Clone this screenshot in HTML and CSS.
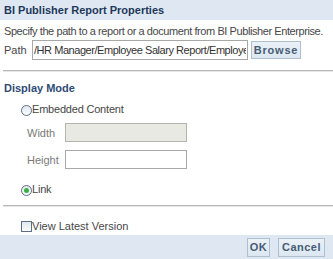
FILE: index.html
```html
<!DOCTYPE html>
<html lang="en">
  <head>
    <meta charset="UTF-8" />
    <title>BI Publisher Report Properties</title>
    <link rel="stylesheet" href="styles.css">
  </head>
  <body>
    <div class="dialog">
      <div class="title">BI Publisher Report Properties</div>
      <div class="intro">Specify the path to a report or a document from BI Publisher Enterprise.</div>
      <div class="path-row">
        <span class="label">Path</span>
        <input class="field path" type="text" value="/HR Manager/Employee Salary Report/Employee Salary Report.xdo">
        <button class="btn browse">Browse</button>
      </div>
      <hr class="sep">
      <div class="section">Display Mode</div>
      <label class="radio-row">
        <span class="radio"></span>Embedded Content
      </label>
      <div class="dim-row">
        <span class="dim-label">Width</span>
        <span class="field dim disabled"></span>
      </div>
      <div class="dim-row">
        <span class="dim-label">Height</span>
        <span class="field dim"></span>
      </div>
      <label class="radio-row link">
        <span class="radio on"></span>Link
      </label>
      <hr class="sep lower">
      <label class="check-row">
        <span class="check"></span>View Latest Version
      </label>
      <div class="footer">
        <button class="btn ok">OK</button>
        <button class="btn cancel">Cancel</button>
      </div>
    </div>
  </body>
</html>
```

FILE: styles.css
```css
body {
  margin: 0;
  background: #ffffff;
  font-family: "Liberation Sans", Arial, sans-serif;
  font-size: 11px;
  color: #3c3c3c;
}

.dialog {
  width: 333px;
  height: 259px;
  display: flex;
  flex-direction: column;
  overflow: hidden;
}

.title {
  background: #dfe8f2;
  height: 20px;
  line-height: 21px;
  padding-left: 4px;
  font-weight: bold;
  color: #22385a;
}

.intro {
  margin-top: 4px;
  padding-left: 4px;
  line-height: 14px;
  color: #474747;
  white-space: nowrap;
  letter-spacing: -0.42px;
}

.path-row {
  display: flex;
  align-items: center;
  height: 20px;
  margin-top: 2px;
  padding-left: 4px;
}

.label {
  width: 28px;
  color: #474747;
}

.field {
  box-sizing: border-box;
  border: 1px solid #a8a8a8;
  background: #fff;
  font-family: inherit;
  font-size: 11px;
  color: #333;
}

.path {
  width: 216px;
  height: 20px;
  padding: 0 1px;
  margin: 0;
  outline: none;
  letter-spacing: -0.45px;
}

.btn {
  box-sizing: border-box;
  height: 19px;
  padding: 0;
  margin: 0;
  border: 1px solid #aebfcf;
  background: linear-gradient(#eaf1f7, #dce7f1);
  font-family: "Liberation Sans", Arial, sans-serif;
  font-size: 11px;
  font-weight: bold;
  letter-spacing: 0.5px;
  color: #465c74;
}

.browse {
  margin-left: 3px;
  width: 50px;
  height: 18px;
  letter-spacing: 0.8px;
}

.sep {
  border: none;
  border-top: 1px solid #b9b9b9;
  border-bottom: 1px solid #e6e6e6;
  margin: 10px 0 0 3px;
  height: 0;
}

.section {
  margin-top: 9px;
  padding-left: 4px;
  font-weight: bold;
  color: #2f4b76;
  line-height: 14px;
}

.radio-row {
  display: flex;
  align-items: center;
  margin-top: 7px;
  padding-left: 21px;
  line-height: 14px;
  letter-spacing: -0.2px;
  color: #474747;
}

.radio {
  box-sizing: border-box;
  width: 11px;
  height: 11px;
  margin-top: 3px;
  border: 1px solid #5a6e88;
  border-radius: 50%;
  background: linear-gradient(#e4e9ef, #fbfcfd);
  display: flex;
  align-items: center;
  justify-content: center;
}

.radio.on::after {
  content: "";
  width: 5px;
  height: 5px;
  border-radius: 50%;
  background: #3bb043;
}

.dim-row {
  display: flex;
  align-items: center;
  margin-top: 7px;
  padding-left: 27px;
}

.dim-row + .dim-row {
  margin-top: 8px;
}

.dim-label {
  width: 38px;
  color: #7a7a7a;
}

.dim {
  width: 122px;
  height: 19px;
}

.disabled {
  background: #e9e9e3;
  border-color: #b5b5b0;
}

.radio-row.link {
  margin-top: 13px;
}

.sep.lower {
  margin-top: 9px;
}

.check-row {
  display: flex;
  align-items: center;
  margin-top: 12px;
  padding-left: 21px;
  line-height: 14px;
  color: #474747;
}

.check {
  box-sizing: border-box;
  width: 11px;
  height: 11px;
  border: 1px solid #5f6f86;
  background: linear-gradient(#e2e8ee, #fbfcfd);
}

.footer {
  margin-top: 2px;
  flex: 1;
  background: #dfe8f2;
  display: flex;
  justify-content: flex-end;
  align-items: center;
  gap: 8px;
  padding-right: 8px;
}

.ok {
  width: 23px;
}

.cancel {
  width: 47px;
}
```
